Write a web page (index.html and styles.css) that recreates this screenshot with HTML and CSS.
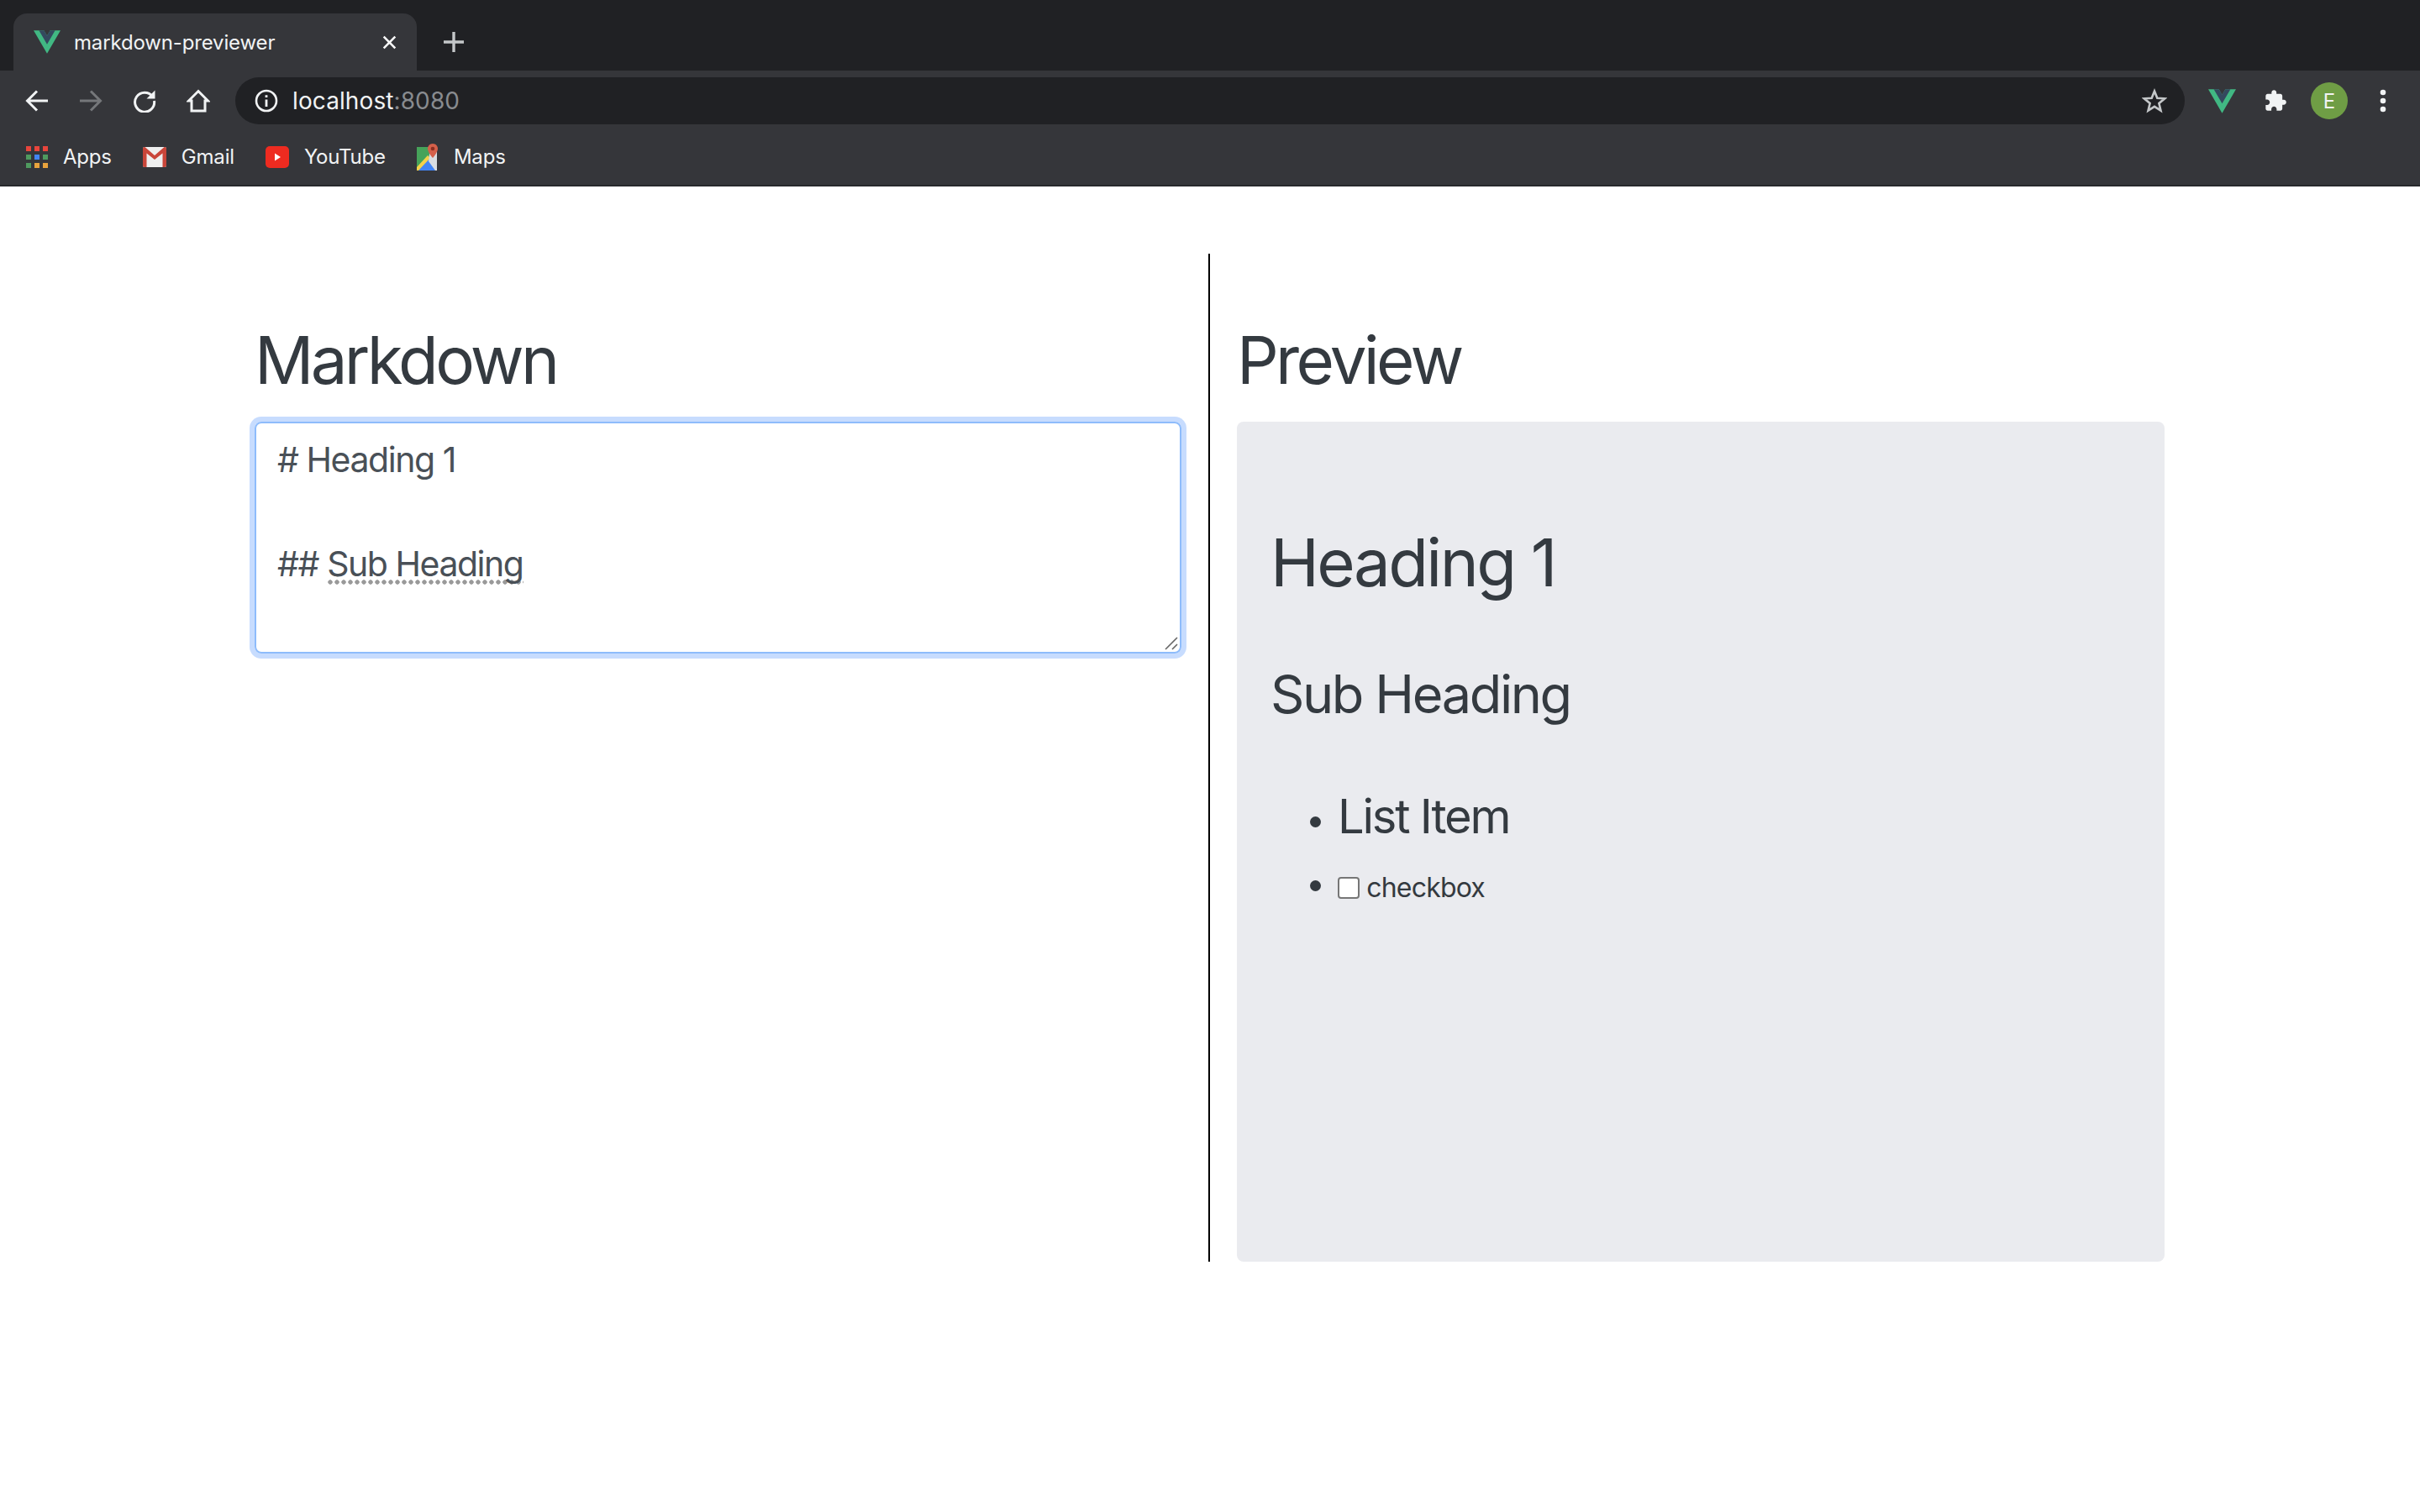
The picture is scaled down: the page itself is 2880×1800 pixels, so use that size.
FILE: index.html
```html
<!DOCTYPE html>
<html lang="en">

<head>
    <meta charset="UTF-8">
    <title>markdown-previewer</title>
    <link rel="stylesheet" href="styles.css">
</head>

<body>
    <header class="chrome">
        <div class="tabstrip">
            <div class="tab">
                <svg class="favicon" viewBox="0 0 261.76 226.69">
                    <path fill="#41b883" d="M161.096.001l-30.225 52.351L100.647.001H-.005l130.877 226.688L261.749.001z"/>
                    <path fill="#34495e" d="M161.096.001l-30.225 52.351L100.647.001H52.346l78.526 136.01L209.398.001z"/>
                </svg>
                <span class="tab-title">markdown-previewer</span>
                <svg class="tab-close" viewBox="0 0 20 20">
                    <path d="M2 2L18 18M18 2L2 18" stroke="#fff" stroke-width="3" fill="none"/>
                </svg>
            </div>
            <svg class="new-tab" viewBox="0 0 24 24">
                <path d="M12 0V24M0 12H24" stroke="#c4c7c9" stroke-width="3.4" fill="none"/>
            </svg>
        </div>

        <div class="toolbar">
            <span class="tool">
                <svg viewBox="0 0 28 28"><path d="M27 14H3M14 2.500L2.500 14L14 25.500" stroke="#f1f3f4" stroke-width="3" fill="none"/></svg>
            </span>
            <span class="tool">
                <svg viewBox="0 0 28 28"><path d="M1 14H25M14 2.500L25.500 14L14 25.500" stroke="#75777a" stroke-width="3" fill="none"/></svg>
            </span>
            <span class="tool">
                <svg viewBox="0 0 28 28">
                    <path d="M23.500 9A11.500 11.500 0 1 0 25.500 14" stroke="#f1f3f4" stroke-width="3" fill="none"/>
                    <path d="M26.500 1.500V11.500H16.500z" fill="#f1f3f4"/>
                </svg>
            </span>
            <span class="tool">
                <svg viewBox="0 0 28 28"><path d="M14 2.500L25.500 14H22V26H6V14H2.500z" stroke="#f1f3f4" stroke-width="3" fill="none"/></svg>
            </span>
            <div class="omnibox">
                <svg class="info" viewBox="0 0 28 28">
                    <circle cx="14" cy="14" r="12" stroke="#f1f3f4" stroke-width="2.600" fill="none"/>
                    <path d="M12.600 12.500h2.800v8.500h-2.800zM12.600 7.200h2.800v2.800h-2.800z" fill="#f1f3f4"/>
                </svg>
                <span class="url">localhost<span class="url-port">:8080</span></span>
                <svg class="star" viewBox="0 0 30 30">
                    <path d="M15 3.500L18.300 11.700L27.200 12.300L20.400 18L22.500 26.600L15 21.900L7.500 26.600L9.600 18L2.800 12.300L11.700 11.700z" stroke="#c4c7c9" stroke-width="2.600" fill="none"/>
                </svg>
            </div>
            <div class="toolbar-right">
                <span class="tool">
                    <svg class="ext-vue" viewBox="0 0 261.76 226.69">
                        <path fill="#41b883" d="M161.096.001l-30.225 52.351L100.647.001H-.005l130.877 226.688L261.749.001z"/>
                        <path fill="#34495e" d="M161.096.001l-30.225 52.351L100.647.001H52.346l78.526 136.01L209.398.001z"/>
                    </svg>
                </span>
                <span class="tool">
                    <svg class="ext-puzzle" viewBox="0 0 24 24">
                        <path fill="#f1f3f4" d="M20.500 11H19V7c0-1.100-.9-2-2-2h-4V3.500C13 2.120 11.880 1 10.500 1S8 2.120 8 3.500V5H4c-1.100 0-1.990.9-1.990 2v3.800H3.500c1.490 0 2.700 1.210 2.700 2.700s-1.210 2.700-2.700 2.700H2V20c0 1.100.9 2 2 2h3.800v-1.500c0-1.490 1.210-2.700 2.700-2.700 1.490 0 2.700 1.210 2.700 2.700V22H17c1.100 0 2-.9 2-2v-4h1.500c1.380 0 2.500-1.120 2.500-2.500S21.880 11 20.500 11z"/>
                    </svg>
                </span>
                <span class="tool"><span class="avatar">E</span></span>
                <span class="tool">
                    <svg class="menu-dots" viewBox="0 0 8 28">
                        <circle cx="4" cy="4" r="3.300" fill="#f1f3f4"/>
                        <circle cx="4" cy="14" r="3.300" fill="#f1f3f4"/>
                        <circle cx="4" cy="24" r="3.300" fill="#f1f3f4"/>
                    </svg>
                </span>
            </div>
        </div>

        <div class="bookmarks">
            <a class="bookmark">
                <svg class="grid-icon" viewBox="0 0 26 26">
                    <rect x="0" y="0" width="6" height="6" fill="#e8453c"/><rect x="10" y="0" width="6" height="6" fill="#e8453c"/><rect x="20" y="0" width="6" height="6" fill="#e8453c"/>
                    <rect x="0" y="10" width="6" height="6" fill="#4f9a5f"/><rect x="10" y="10" width="6" height="6" fill="#4285f4"/><rect x="20" y="10" width="6" height="6" fill="#4f9a5f"/>
                    <rect x="0" y="20" width="6" height="6" fill="#4f9a5f"/><rect x="10" y="20" width="6" height="6" fill="#e8a33d"/><rect x="20" y="20" width="6" height="6" fill="#e8a33d"/>
                </svg>
                Apps
            </a>
            <a class="bookmark">
                <svg class="gmail-icon" viewBox="0 0 28 26">
                    <rect x="0" y="1" width="28" height="24" rx="2" fill="#efefef"/>
                    <path d="M0 3C0 1.500 1.500.5 3 1.500L14 11L25 1.500C26.500.5 28 1.500 28 3V23c0 1-.8 2-2 2H23.500V8.500L14 16L4.500 8.500V25H2c-1.200 0-2-1-2-2z" fill="#c9463a"/>
                </svg>
                Gmail
            </a>
            <a class="bookmark">
                <svg class="youtube-icon" viewBox="0 0 28 26">
                    <rect x="0" y="0" width="28" height="26" rx="5" fill="#ee2b20"/>
                    <path d="M11 8.500L18 13L11 17.500z" fill="#fff"/>
                </svg>
                YouTube
            </a>
            <a class="bookmark">
                <svg class="maps-icon" viewBox="0 0 26 32">
                    <path d="M0 4H16V32H0z" fill="#46a35a"/>
                    <path d="M0 32L13 17L24 32z" fill="#4285f4"/>
                    <path d="M0 28L13 14L16 17L2 32H0z" fill="#f4d24a"/>
                    <path d="M16 4H24V32H22L14 21z" fill="#d9dde1"/>
                    <path d="M19 0C15.500 0 13 2.800 13 6C13 10.500 19 17 19 17C19 17 25 10.500 25 6C25 2.800 22.500 0 19 0z" fill="#d5604a"/>
                    <circle cx="19" cy="6" r="2.300" fill="#8c2f22"/>
                </svg>
                Maps
            </a>
        </div>
    </header>

    <main class="page">
        <section class="col col-editor">
            <h1>Markdown</h1>
            <div class="editor">
                <p># Heading 1</p>
                <p>&nbsp;</p>
                <p>## <span class="squiggle">Sub Heading</span></p>
                <svg class="grip" viewBox="0 0 16 16">
                    <path d="M1 15L15 1M9 15L15 9" stroke="#666" stroke-width="1.600" fill="none"/>
                </svg>
            </div>
        </section>

        <section class="col col-preview">
            <h1>Preview</h1>
            <div class="preview">
                <h1 class="preview-h1">Heading 1</h1>
                <h2 class="preview-h2">Sub Heading</h2>
                <ul class="preview-list">
                    <li><h3>List Item</h3></li>
                    <li class="check-item"><input type="checkbox" class="check"> checkbox</li>
                </ul>
            </div>
        </section>
    </main>
</body>

</html>
```

FILE: styles.css
```css
* {
    box-sizing: border-box;
}

body {
    margin: 0;
    background-color: white;
    font-family: Inter, "Noto Sans", sans-serif;
    color: #343a40;
}

.chrome {
    height: 222px;
    background-color: #35363a;
    border-bottom: 2px solid #27282b;
    color: #f1f3f4;
}

.tabstrip {
    display: flex;
    align-items: flex-end;
    height: 84px;
    padding-left: 16px;
    background-color: #202124;
}

.tab {
    display: flex;
    align-items: center;
    width: 480px;
    height: 68px;
    padding: 0 24px;
    background-color: #35363a;
    border-radius: 16px 16px 0 0;
}

.favicon {
    width: 32px;
    height: 28px;
}

.tab-title {
    margin-left: 16px;
    font-size: 24px;
    letter-spacing: -0.15px;
}

.tab-close {
    width: 17px;
    height: 17px;
    margin-left: auto;
}

.new-tab {
    width: 24px;
    height: 24px;
    margin: 0 0 22px 32px;
}

.toolbar {
    display: flex;
    align-items: center;
    height: 72px;
    padding: 0 12px;
}

.tool {
    display: flex;
    align-items: center;
    justify-content: center;
    width: 64px;
    height: 64px;
}

.tool svg {
    width: 28px;
    height: 28px;
}

.tool .ext-vue {
    width: 33px;
    height: 29px;
}

.tool .menu-dots {
    width: 8px;
}

.omnibox {
    display: flex;
    align-items: center;
    flex: 1;
    height: 56px;
    margin: 0 12px;
    padding: 0 20px 0 23px;
    background-color: #202124;
    border-radius: 28px;
}

.info {
    width: 28px;
    height: 28px;
}

.url {
    margin-left: 17px;
    font-size: 28px;
    letter-spacing: 0.1px;
}

.url-port {
    color: #888b8f;
}

.star {
    width: 30px;
    height: 30px;
    margin-left: auto;
    margin-right: 1px;
}

.toolbar-right {
    display: flex;
}

.avatar {
    display: flex;
    align-items: center;
    justify-content: center;
    width: 44px;
    height: 44px;
    background-color: #6f9d45;
    border-radius: 50%;
    font-size: 24px;
}

.bookmarks {
    display: flex;
    align-items: center;
    height: 64px;
    padding: 0 0 3px 31px;
    font-size: 24px;
}

.bookmark {
    display: flex;
    align-items: center;
    gap: 18px;
    margin-right: 37px;
    letter-spacing: -0.2px;
}

.bookmark svg {
    width: 28px;
    height: 26px;
}

.bookmark .grid-icon {
    width: 26px;
}

.bookmark .maps-icon {
    width: 26px;
    height: 32px;
}

.page {
    display: flex;
    justify-content: center;
    padding-top: 80px;
}

.col {
    width: 1169px;
    height: 1200px;
    padding: 0 32px;
}

.col-editor {
    border-right: 2px solid black;
}

.col-preview {
    padding-right: 33px;
}

.col h1 {
    margin: 0;
    padding-top: 79px;
    padding-bottom: 25px;
    font-size: 78px;
    line-height: 96px;
    font-weight: 400;
    letter-spacing: -3.7px;
}

.editor {
    position: relative;
    height: 276px;
    padding: 12px 25px;
    border: 2px solid #8ebcfb;
    border-radius: 8px;
    box-shadow: 0 0 0 6px #c7dcfe;
    color: #495057;
    font-size: 41px;
    line-height: 62px;
    letter-spacing: -1.45px;
}

.editor p {
    margin: 0;
}

.squiggle {
    background: radial-gradient(circle, #9a9a9a 2.4px, transparent 3px) 0 100% / 8px 6px repeat-x;
}

.grip {
    position: absolute;
    right: 2px;
    bottom: 2px;
    width: 16px;
    height: 16px;
}

.preview {
    height: 1000px;
    padding: 120px 40px 0;
    background-color: #eaebef;
    border-radius: 8px;
}

.col .preview-h1 {
    padding: 0;
    margin-bottom: 70px;
    letter-spacing: -2.6px;
}

.preview-h2 {
    margin: 0 0 74px;
    font-size: 63px;
    line-height: 77px;
    font-weight: 400;
    letter-spacing: -2.4px;
}

.preview-list {
    margin: 0;
    padding-left: 80px;
    font-size: 32px;
    line-height: 48px;
}

.preview-list li::marker {
    font-size: 40px;
}

.preview-list h3 {
    margin: 0 0 24px;
    font-size: 56px;
    line-height: 67px;
    font-weight: 400;
    letter-spacing: -2.2px;
}

.check-item {
    letter-spacing: -0.8px;
}

.check {
    appearance: none;
    width: 26px;
    height: 26px;
    margin: 0;
    vertical-align: -2px;
    background-color: white;
    border: 2px solid #767676;
    border-radius: 4px;
}
```
